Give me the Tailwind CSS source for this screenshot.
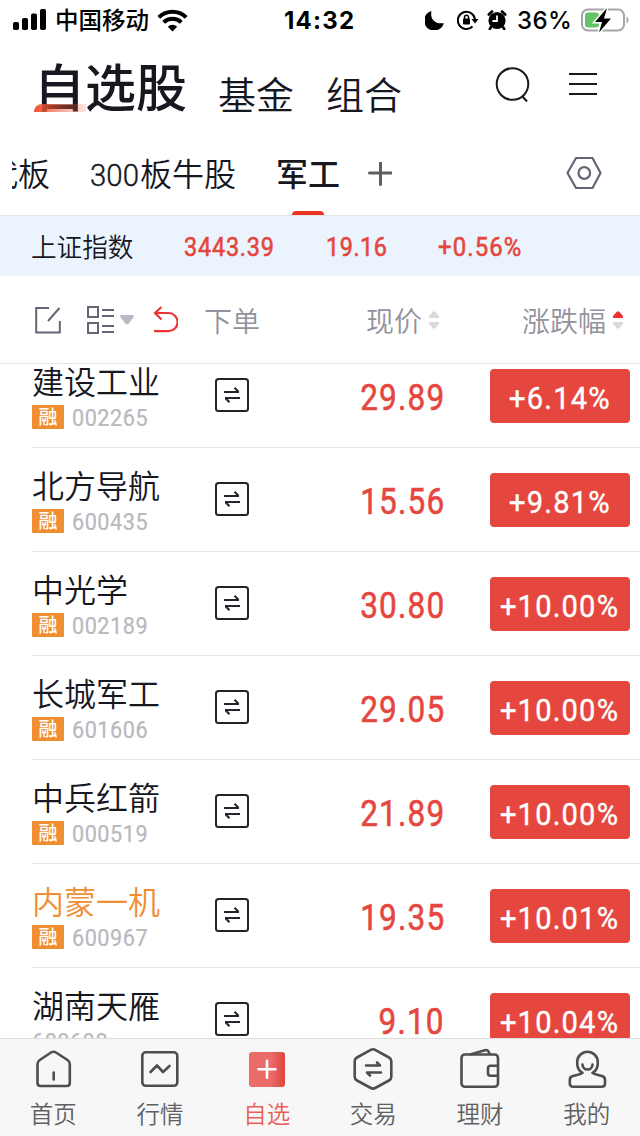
<!DOCTYPE html>
<html lang="zh-CN">
  <head>
    <meta charset="UTF-8" />
    <meta name="viewport" content="width=device-width, initial-scale=1.0" />
    <title>自选股</title>
    <script src="https://cdn.jsdelivr.net/npm/@tailwindcss/browser@4"></script>
  </head>
  <body class="w-[640px] h-[1136px] overflow-hidden flex flex-col bg-white text-[#17171f] font-['Roboto','Noto_Sans_CJK_SC',sans-serif]">
    <!-- status bar -->
    <div class="h-10 shrink-0 flex items-center text-black font-['Inter','Noto_Sans_CJK_SC',sans-serif]">
      <div class="w-[284px] pl-[13px] flex items-center">
        <svg class="w-[34px] h-[22px]" viewBox="0 0 34 22" fill="currentColor">
          <rect x="0" y="13" width="6" height="8" rx="1.8" />
          <rect x="9" y="9" width="6" height="12" rx="1.8" />
          <rect x="18" y="4.500" width="6" height="16.500" rx="1.8" />
          <rect x="27" y="0" width="6" height="21" rx="1.8" />
        </svg>
        <span class="ml-2 pt-0.5 text-[23.5px] leading-10 font-medium">中国移动</span>
        <svg class="ml-2 w-[31px] h-[23px]" viewBox="0 0 31 23" fill="none" stroke="currentColor" stroke-width="4">
          <path d="M1.800 8.300a19.500 19.500 0 0 1 27.400 0M6.700 13.300a12.500 12.500 0 0 1 17.600 0" />
          <path d="M15.500 22.500l-4.700-4.800a6.800 6.800 0 0 1 9.400 0z" fill="currentColor" stroke="none" />
        </svg>
      </div>
      <div class="w-[141px] pt-0.5 text-2xl font-bold tracking-[1.2px]">14:32</div>
      <svg class="w-5 h-5" viewBox="0 0 20 20" fill="currentColor">
        <path d="M6.500 1C4.800 8 9 14.500 18.800 13.200A10 10 0 1 1 6.500 1z" />
      </svg>
      <svg class="ml-3 w-[22px] h-5" viewBox="0 0 22 20" fill="none" stroke="currentColor" stroke-width="2">
        <path d="M15.500 16.500A8.600 8.600 0 1 1 18 9.500" />
        <path d="M14.500 9h7l-3.500 4.500z" fill="currentColor" stroke="none" />
        <rect x="6" y="8.500" width="7" height="6" rx="1" fill="currentColor" stroke="none" />
        <path d="M7.500 9V7.200a2 2 0 0 1 4 0V9" stroke-width="1.500" />
      </svg>
      <svg class="ml-2 w-5 h-5" viewBox="0 0 20 20" fill="currentColor">
        <circle cx="10" cy="10.500" r="8.600" />
        <path d="M1.800 4.500L5 1.500M18.200 4.500L15 1.500M4 17L2.800 19M16 17l1.200 2" stroke="currentColor" stroke-width="2.600" stroke-linecap="round" />
        <path d="M10 5.500v5.500H5.500" fill="none" stroke="#fff" stroke-width="1.800" />
      </svg>
      <span class="ml-2.5 pt-0.5 text-2xl font-medium tracking-[0.4px]">36%</span>
      <svg class="ml-[9px] w-12 h-[30px]" viewBox="0 0 48 30">
        <rect x="1" y="4.500" width="42" height="21" rx="6" fill="none" stroke="#a6a6a6" stroke-width="2" />
        <rect x="4" y="7.500" width="14" height="15" rx="3" fill="#65c466" />
        <path d="M45.500 11.500a4 4 0 0 1 0 7z" fill="#a6a6a6" />
        <path d="M26 3L14 17h7l-3 10.500L30 13.500h-7z" fill="#000" stroke="#fff" stroke-width="3" paint-order="stroke" />
      </svg>
    </div>

    <!-- page titles -->
    <header class="h-[92px] shrink-0 flex pl-[34px]">
      <div class="relative h-[72px]">
        <h1 class="text-[51px] leading-[100px] font-medium">自选股</h1>
        <div class="absolute left-0 bottom-0 w-[52px] h-2 rounded-tl-lg bg-linear-to-r from-[#f0502d] via-[#e8502f]/50 to-[#f0502d]/15"></div>
      </div>
      <div class="ml-[31px] text-[38px] leading-[113px] font-[350]">基金</div>
      <div class="ml-8 text-[38px] leading-[113px] font-[350]">组合</div>
      <svg class="ml-[93px] mt-[26px] w-9 h-9" viewBox="0 0 36 36" fill="none" stroke="currentColor" stroke-width="2">
        <circle cx="17.500" cy="18" r="15.800" />
        <path d="M27 30l5 5.500" />
      </svg>
      <svg class="ml-[38px] mt-8 w-7 h-6" viewBox="0 0 28 24" stroke="currentColor" stroke-width="2">
        <path d="M0 2h28M0 12h28M0 22h28" />
      </svg>
    </header>

    <!-- group tabs -->
    <nav class="h-[84px] shrink-0 flex items-center pl-3 border-b border-[#e2e5ea] text-[32px] leading-[86px] font-[350]">
      <div class="w-[38px] h-[83px] flex justify-end overflow-hidden"><span class="whitespace-nowrap">代板</span></div>
      <div class="ml-10 w-[147px] h-[83px] flex whitespace-nowrap"><span class="w-[50px]"><span class="inline-block origin-left scale-x-[.92] [-webkit-text-stroke:0.4px]">300</span></span>板牛股</div>
      <div class="relative ml-[39px] w-16 h-[83px] font-medium">军工
        <div class="absolute left-4 bottom-0 w-8 h-1 rounded-t bg-[#eb3323]"></div>
      </div>
      <svg class="ml-7 w-6 h-6" viewBox="0 0 24 24" stroke="#5f5f61" stroke-width="3" stroke-linecap="round">
        <path d="M1.500 11h22M12.500 .5v22" />
      </svg>
      <svg class="ml-[174px] w-9 h-9 mb-0.5" viewBox="0 0 36 36" fill="none" stroke="#646675" stroke-width="2.200" stroke-linejoin="round">
        <path d="M10 3h16.500l8 15-8 15H10L1.500 18z" />
        <circle cx="18.300" cy="18" r="5.800" />
      </svg>
    </nav>

    <!-- index strip -->
    <div class="h-[60px] shrink-0 flex items-center bg-[#ebf4fc] pl-[31px] pt-0.5 leading-[60px]">
      <span class="w-[153px] text-[25.6px] font-[350] pt-0.5">上证指数</span>
      <span class="w-[142px] text-[26px] text-[#e5463e] [-webkit-text-stroke:0.6px]"><span class="inline-block origin-left scale-x-[.9] tracking-[.9px]">3443.39</span></span>
      <span class="w-28 text-[26px] text-[#e5463e] [-webkit-text-stroke:0.6px]"><span class="inline-block origin-left scale-x-[.9] tracking-[.6px]">19.16</span></span>
      <span class="text-[26px] text-[#e5463e] [-webkit-text-stroke:0.6px]"><span class="inline-block origin-left scale-x-[.92] tracking-[1.2px]">+0.56%</span></span>
    </div>

    <!-- table head -->
    <div class="h-[88px] shrink-0 flex items-center border-b border-[#e5e5e7] pl-[35px] text-[28px] leading-[88px] font-[350] text-[#92929c]">
      <svg class="w-[26px] h-7" viewBox="0 0 26 28" fill="none" stroke="#646675" stroke-width="2">
        <path d="M14 2H1.200v24.500h23.600V15M13 15L24.500 2" />
      </svg>
      <svg class="ml-[26px] w-7 h-7" viewBox="0 0 28 28" fill="none" stroke="#646675" stroke-width="2">
        <path d="M1 1h10v10H1zM1 17h10v10H1zM15 4h12M15 10h12M15 20h12M15 26h12" />
      </svg>
      <svg class="ml-[5px] w-[14px] h-[10px]" viewBox="0 0 14 10" fill="#b9bac6">
        <path d="M1.500 0h11a1.300 1.300 0 0 1 1 2.200L8.500 8.800q-1.500 1.400-3 0L.5 2.200A1.300 1.300 0 0 1 1.500 0z" />
      </svg>
      <svg class="ml-[19px] w-[25px] h-[27px]" viewBox="0 0 25 27" fill="none" stroke="#f03434" stroke-width="2.200">
        <path d="M1 25.200h14.500a9.100 9.100 0 0 0 0-18.200H2M8.500 1L2 7l6.500 6.500" />
      </svg>
      <span class="ml-[26px] w-[162px] pt-1.5">下单</span>
      <span class="w-14 pt-1.5">现价</span>
      <svg class="ml-[7px] w-[10px] h-[18px]" viewBox="0 0 10 18" fill="#dadada">
        <path d="M4 .5h2L10 5v2H0V5z" />
        <path d="M0 11h10v2l-4 4.500H4L0 13z" />
      </svg>
      <span class="ml-[83px] w-[84px] pt-1.5">涨跌幅</span>
      <svg class="ml-[7px] w-[10px] h-[18px]" viewBox="0 0 10 18" fill="#dadada">
        <path d="M4 .5h2L10 5v2H0V5z" fill="#f02f2f" />
        <path d="M0 11h10v2l-4 4.500H4L0 13z" />
      </svg>
    </div>

    <!-- stock list, scrolled a little -->
    <main class="flex-1 min-h-0 overflow-hidden">
      <div id="list" class="-mt-5"></div>
    </main>

    <!-- bottom tabs -->
    <footer class="h-[98px] shrink-0 grid grid-cols-6 border-t border-[#dcdcdc] bg-[#f7f7f7] text-[23.5px] font-[350] text-[#4e4e50]">
      <div class="flex flex-col items-center pt-2">
        <svg class="w-11 h-11" viewBox="0 0 44 44" fill="none" stroke="currentColor" stroke-width="2.600" stroke-linecap="round" stroke-linejoin="round">
          <path d="M20 5.500q2.500-1.500 5 0l11.500 7.500q2.300 1.500 2.300 4v19q0 3-3 3H9.500q-3 0-3-3v-19q0-2.500 2.300-4z" />
          <path d="M22.700 25.500v7" />
        </svg>
        <span class="leading-[49px] text-[#606062]">首页</span>
      </div>
      <div class="flex flex-col items-center pt-2">
        <svg class="w-11 h-11" viewBox="0 0 44 44" fill="none" stroke="currentColor" stroke-width="2.600" stroke-linecap="round" stroke-linejoin="round">
          <rect x="4.300" y="5.300" width="35" height="33.500" rx="3.500" />
          <path d="M12.500 25l6.500-6.500 6 6.500 6.500-6" />
        </svg>
        <span class="leading-[49px] text-[#606062]">行情</span>
      </div>
      <div class="flex flex-col items-center pt-2">
        <div class="h-11 pt-[5px]">
          <div class="w-9 h-[35px] rounded-[3px] bg-linear-to-r from-[#ea6c68] from-60% to-[#dd443c]">
            <svg class="w-9 h-[35px]" viewBox="0 0 36 35" stroke="#fff" stroke-width="2.600" stroke-linecap="round">
              <path d="M9.500 17.300h17M18 8.800v17" />
            </svg>
          </div>
        </div>
        <span class="leading-[49px] text-[#e85f5a]">自选</span>
      </div>
      <div class="flex flex-col items-center pt-2">
        <svg class="w-11 h-11" viewBox="0 0 44 44" fill="none" stroke="currentColor" stroke-width="2.600" stroke-linejoin="round">
          <path d="M19.800 2.900q2.200-1.200 4.400 0L38 10.500q2.300 1.300 2.300 3.500v16q0 2.200-2.300 3.500L24.200 41q-2.200 1.200-4.400 0L6 33.500Q3.700 32.200 3.700 30V14q0-2.200 2.300-3.500z" />
          <path d="M15 18.500h14l-3-3M30 25.500H16l3 3" stroke-linecap="round" />
        </svg>
        <span class="leading-[49px] text-[#606062]">交易</span>
      </div>
      <div class="flex flex-col items-center pt-2">
        <svg class="w-11 h-11" viewBox="0 0 44 44" fill="none" stroke="currentColor" stroke-width="2.600" stroke-linejoin="round">
          <rect x="3.500" y="7.500" width="36.500" height="32.300" rx="3.500" />
          <path d="M12 7.500L27 3.200q2.500-.7 3.500 1.300l1.500 3M40 18.800H32.500q-2.500 0-2.500 2.500v5q0 2.500 2.500 2.500H40" />
        </svg>
        <span class="leading-[49px] text-[#606062]">理财</span>
      </div>
      <div class="flex flex-col items-center pt-2">
        <svg class="w-11 h-11" viewBox="0 0 44 44" fill="none" stroke="currentColor" stroke-width="2.600" stroke-linecap="round" stroke-linejoin="round">
          <path d="M17.500 26C13 23.500 12 19 12.200 15a10.300 10.300 0 0 1 20.600 0C33 19 32 23.500 27.500 26c2.500 1.500 6 2 9.500 3q3 .8 3 4v3.500q0 3.200-3.200 3.200H8q-3.200 0-3.200-3.200V33q0-3.200 3-4c3.500-1 7.200-1.500 9.700-3z" />
          <path d="M17.500 17.500a5 5 0 0 0 10 0" />
        </svg>
        <span class="leading-[49px] text-[#606062]">我的</span>
      </div>
    </footer>

    <script>
      const stocks = [
        ["建设工业", "002265", "29.89", "+6.14%"],
        ["北方导航", "600435", "15.56", "+9.81%"],
        ["中光学", "002189", "30.80", "+10.00%"],
        ["长城军工", "601606", "29.05", "+10.00%"],
        ["中兵红箭", "000519", "21.89", "+10.00%"],
        ["内蒙一机", "600967", "19.35", "+10.01%", true],
        ["湖南天雁", "600698", "9.10", "+10.04%"]
      ];

      document.getElementById("list").innerHTML = stocks.map(([name, code, price, change, marked], i) => `
        <div class="ml-8 h-[104px] flex border-b border-[#e5e5e7]">
          <div class="w-[183px] pt-4">
            <div class="text-[32px] leading-[46px] h-[45px] font-[350] ${marked ? "text-[#f08e33]" : ""}">${name}</div>
            <div class="flex h-6">
              ${i < 6 ? `<span class="w-8 h-6 mr-2 rounded-[1px] bg-[#f08e33] text-white text-[19px] leading-[25px] font-medium text-center">融</span>` : ""}
              <span class="inline-block origin-left scale-x-[.9] text-2xl leading-[26px] tracking-[.6px] text-[#b8b8bd] [-webkit-text-stroke:0.2px]">${code}</span>
            </div>
          </div>
          <svg class="mt-[34px] w-[34px] h-[34px]" viewBox="0 0 34 34" fill="none" stroke="#24242c" stroke-width="2">
            <rect x="1" y="1" width="32" height="32" rx="2.500" />
            <path d="M9 14h15M19.500 9.800l4 4M25 20H10M14.500 24.200l-4-4" />
          </svg>
          <div class="w-[196px] text-right text-4xl leading-[108px] h-[103px] text-[#e5463e] [-webkit-text-stroke:0.6px]">
            <span class="inline-block origin-right scale-x-[.875] tracking-[1.4px]">${price}</span>
          </div>
          <div class="ml-[45px] mt-[25px] w-[140px] h-[54px] rounded bg-[#e5463e] text-white text-[32px] leading-[58px] flex justify-center [-webkit-text-stroke:0.4px]">
            <span class="inline-block scale-x-[.91] tracking-[1.3px]">${change}</span>
          </div>
        </div>`).join("");
    </script>
  </body>
</html>
